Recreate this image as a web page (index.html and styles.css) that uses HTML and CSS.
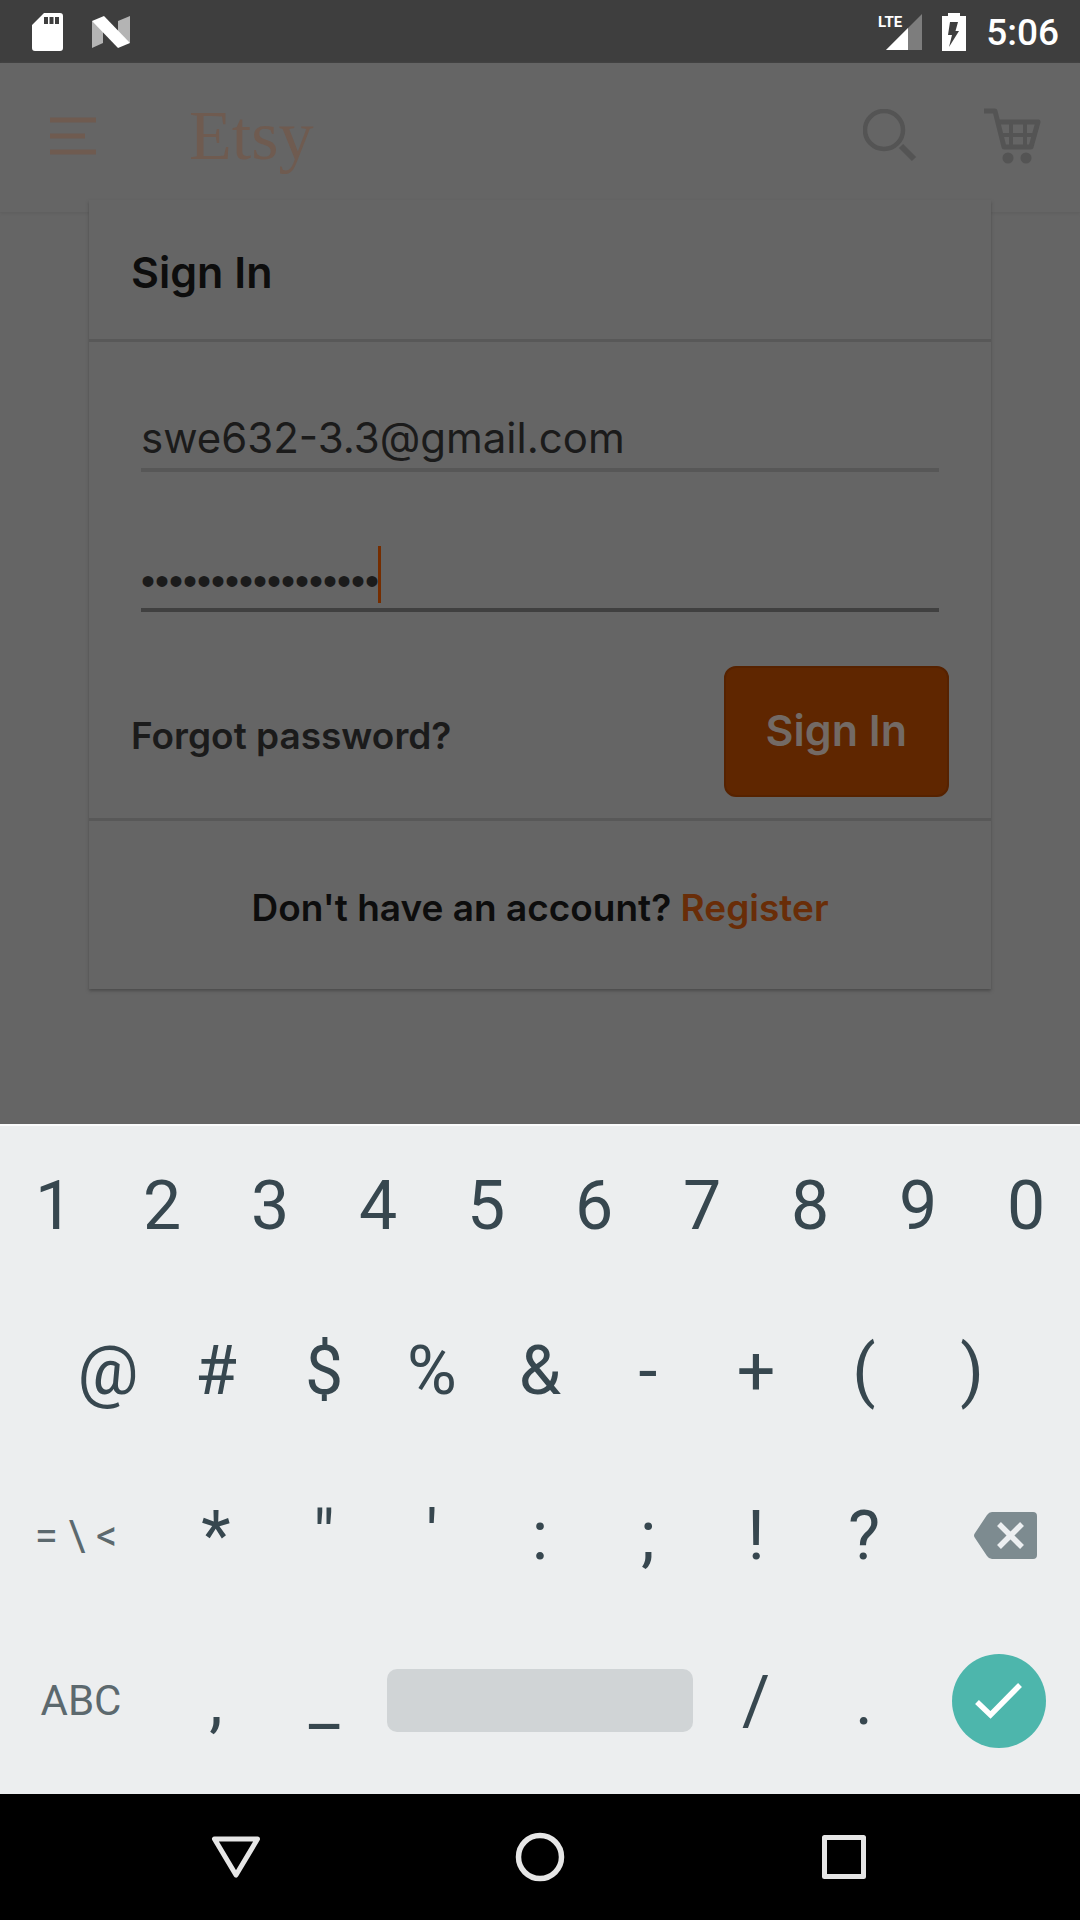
FILE: index.html
```html
<!DOCTYPE html>
<html lang="en">
<head>
<meta charset="utf-8">
<meta name="viewport" content="width=device-width, initial-scale=1">
<title>Etsy - Sign In</title>
<link rel="stylesheet" href="styles.css">
</head>
<body>
<div class="status">
  <div class="status-group">
    <svg class="icon-sd" viewBox="0 0 32 38" aria-hidden="true"><path fill="#fff" fill-rule="evenodd" d="M12 0H28Q31 0 31 3V35Q31 38 28 38H3Q0 38 0 35V12ZM12 4V11H16V4ZM17.500 4V11H21.500V4ZM23 4V11H27V4Z"/></svg>
    <svg class="icon-n" viewBox="0 0 38 32" aria-hidden="true"><path fill="#b4b4b4" d="M0 5L11 9V27L0 32ZM26 5L38 0V27L26 22Z"/><path fill="#fff" d="M0 5L12 0L38 27L26 32Z"/></svg>
  </div>
  <div class="status-group">
    <div class="signal">
      <svg class="icon-signal" viewBox="0 0 36 36" aria-hidden="true"><path fill="#7d7d7d" d="M36 0V36H0Z"/><path fill="#fff" d="M22 14V36H0Z"/></svg>
      <span class="lte">LTE</span>
    </div>
    <svg class="icon-battery" viewBox="0 0 24 38" aria-hidden="true"><path fill="#fff" d="M6 0H18V3H24V38H0V3H6Z"/><path fill="#3e3e3e" d="M8 9H16L13.500 18H17L7 34L10 22H6Z"/></svg>
    <span class="clock">5:06</span>
  </div>
</div>

<div class="app">
  <header class="appbar">
    <button class="bar-btn" type="button" aria-label="Menu"><svg class="icon-menu" viewBox="0 0 46 38" aria-hidden="true"><path stroke="#6f5b50" stroke-width="5" d="M0 3H46M0 19H35M0 35H46"/></svg></button>
    <a class="logo" href="#">Etsy</a>
    <button class="bar-btn" type="button" aria-label="Search"><svg class="icon-search" viewBox="0 0 54 54" fill="none" stroke="#545454" aria-hidden="true"><circle cx="21" cy="21" r="19" stroke-width="4.500"/><path stroke-width="6" d="M38 37L51 50"/></svg></button>
    <button class="bar-btn" type="button" aria-label="Cart"><svg class="icon-cart" viewBox="0 0 58 56" fill="none" stroke="#545454" aria-hidden="true"><path stroke-width="5" stroke-linejoin="round" d="M0 3H11L20 39H47L54 14H15"/><path stroke-width="4" d="M17 27H51M27 14V39M41 14V39"/><circle cx="24" cy="50" r="5.500" fill="#545454" stroke="none"/><circle cx="42" cy="50" r="5.500" fill="#545454" stroke="none"/></svg></button>
  </header>

  <main class="card">
    <h1 class="card-title">Sign In</h1>
    <form class="form" onsubmit="return false">
      <div class="field">
        <input class="input" type="text" aria-label="Email" value="swe632-3.3@gmail.com">
      </div>
      <div class="field field-active">
        <input class="input input-password" type="password" aria-label="Password" value="aaaaaaaaaaaaaaaaa">
        <span class="caret"></span>
      </div>
      <div class="actions">
        <a class="forgot" href="#">Forgot password?</a>
        <button class="submit" type="submit">Sign In</button>
      </div>
    </form>
    <p class="register">Don't have an account? <a class="register-link" href="#">Register</a></p>
  </main>
</div>

<section class="keyboard" aria-label="Keyboard">
  <div class="row">
    <button class="key">1</button><button class="key">2</button><button class="key">3</button><button class="key">4</button><button class="key">5</button><button class="key">6</button><button class="key">7</button><button class="key">8</button><button class="key">9</button><button class="key">0</button>
  </div>
  <div class="row row-inset">
    <button class="key">@</button><button class="key">#</button><button class="key">$</button><button class="key">%</button><button class="key">&amp;</button><button class="key">-</button><button class="key">+</button><button class="key">(</button><button class="key">)</button>
  </div>
  <div class="row">
    <button class="key key-wide key-mode key-symbols">= \ &lt;</button><button class="key">*</button><button class="key">"</button><button class="key">'</button><button class="key">:</button><button class="key">;</button><button class="key">!</button><button class="key">?</button>
    <button class="key key-wide key-delete" aria-label="Delete"><svg class="icon-delete" viewBox="0 0 63 47" aria-hidden="true"><path fill="#7d8b90" d="M18 0H59Q63 0 63 4V43Q63 47 59 47H18Q15 47 13 44L1 26Q-1 23.500 1 21L13 3Q15 0 18 0Z"/><path stroke="#eceff1" stroke-width="5.500" d="M25 12L48 35M48 12L25 35"/></svg></button>
  </div>
  <div class="row">
    <button class="key key-wide key-mode">ABC</button><button class="key">,</button><button class="key">_</button>
    <button class="key key-space" aria-label="Space"><span class="space-bar"></span></button>
    <button class="key">/</button><button class="key">.</button>
    <button class="key key-wide" aria-label="Done"><svg class="icon-done" viewBox="0 0 94 94" aria-hidden="true"><circle cx="47" cy="47" r="47" fill="#4db6ac"/><path fill="none" stroke="#fff" stroke-width="5.500" d="M25 48L38.500 61L68 31"/></svg></button>
  </div>
</section>

<nav class="navbar">
  <button class="nav-btn" aria-label="Back"><svg class="icon-nav" viewBox="0 0 50 50" fill="none" stroke="#e6e6e6" stroke-width="5" stroke-linejoin="round" aria-hidden="true"><path d="M3.500 7H46.500L25 43Z"/></svg></button>
  <button class="nav-btn" aria-label="Home"><svg class="icon-nav" viewBox="0 0 50 50" fill="none" stroke="#e6e6e6" stroke-width="5.500" aria-hidden="true"><circle cx="25" cy="25" r="21.500"/></svg></button>
  <button class="nav-btn" aria-label="Overview"><svg class="icon-nav" viewBox="0 0 50 50" fill="none" stroke="#e6e6e6" stroke-width="5" stroke-linejoin="round" aria-hidden="true"><path d="M5.500 5.500H44.500V44.500H5.500Z"/></svg></button>
</nav>
</body>
</html>
```
FILE: styles.css
```css
* {
  box-sizing: border-box;
}

body {
  margin: 0;
  min-height: 100vh;
  display: flex;
  flex-direction: column;
  background: #656565;
  font-family: Inter, "Open Sans", sans-serif;
}

button,
input {
  margin: 0;
  padding: 0;
  border: 0;
  background: none;
  font: inherit;
  color: inherit;
  outline: none;
}

svg {
  display: block;
  flex: none;
}

a {
  text-decoration: none;
}

/* Status bar */
.status {
  display: flex;
  justify-content: space-between;
  align-items: center;
  height: 63px;
  padding: 0 21px 0 32px;
  background: #3e3e3e;
  color: #fff;
  font-family: Roboto, sans-serif;
}

.status-group {
  display: flex;
  align-items: center;
  gap: 20px;
}

.icon-sd {
  width: 32px;
  height: 38px;
  margin-right: 8px;
}

.icon-n {
  width: 38px;
  height: 32px;
}

.signal {
  position: relative;
}

.icon-signal {
  width: 36px;
  height: 36px;
}

.lte {
  position: absolute;
  top: 0;
  right: 20px;
  font-size: 15px;
  line-height: 16px;
  font-weight: 700;
}

.icon-battery {
  width: 24px;
  height: 38px;
}

.clock {
  padding-top: 2px;
  font-size: 37px;
  line-height: 44px;
  font-weight: 500;
}

/* App bar */
.app {
  flex: 1;
}

.appbar {
  display: flex;
  align-items: center;
  height: 149px;
  padding: 0 38px 4px 50px;
  box-shadow: 0 1px 3px #5d5d5d;
}

.bar-btn {
  display: flex;
}

.icon-menu {
  width: 46px;
  height: 38px;
}

.logo {
  flex: 1;
  margin-left: 93px;
  font-family: "Liberation Serif", serif;
  font-size: 70px;
  line-height: 80px;
  color: #6f5b50;
}

.icon-search {
  width: 54px;
  height: 54px;
}

.icon-cart {
  width: 58px;
  height: 56px;
  margin-left: 67px;
}

/* Sign-in card */
.card {
  margin: -12px 89px 0;
  background: #656565;
  box-shadow: 0 2px 3px #4c4c4c;
}

.card-title {
  margin: 0;
  padding: 46px 42px 41px;
  border-bottom: 3px solid #585858;
  font-size: 43px;
  line-height: 52px;
  font-weight: 600;
  color: #0d0d0d;
}

.form {
  padding: 64px 42px 21px;
  border-bottom: 3px solid #585858;
}

.field {
  position: relative;
  margin: 0 10px;
  border-bottom: 4px solid #575757;
}

.field-active {
  margin-top: 74px;
  border-color: #404040;
}

.input {
  display: block;
  width: 100%;
  height: 62px;
  font-size: 42px;
  color: #1b1b1b;
}

.input-password {
  padding-top: 8px;
  font-family: "Liberation Sans", sans-serif;
  font-size: 40px;
}

.caret {
  position: absolute;
  left: 237px;
  bottom: 5px;
  width: 3px;
  height: 57px;
  background: #752d00;
}

.actions {
  display: flex;
  justify-content: space-between;
  align-items: center;
  margin-top: 54px;
}

.forgot {
  padding-top: 8px;
  font-size: 37px;
  line-height: 44px;
  font-weight: 600;
  color: #1b1b1b;
}

.submit {
  height: 131px;
  padding: 0 40px 4px;
  border: 2px solid #562200;
  border-radius: 12px;
  background: #5f2600;
  font-size: 43px;
  font-weight: 600;
  color: #736a65;
}

.register {
  margin: 0;
  padding: 65px 0 59px;
  text-align: center;
  font-size: 37px;
  line-height: 44px;
  font-weight: 600;
  color: #0d0d0d;
}

.register-link {
  color: #692d08;
}

/* Keyboard */
.keyboard {
  padding-bottom: 8px;
  border-top: 2px solid #fafbfb;
  background: #eceeef;
  font-family: Roboto, sans-serif;
  font-size: 68px;
  color: #37474f;
}

.row {
  display: grid;
  grid-template-columns: repeat(20, 1fr);
}

.key {
  display: flex;
  grid-column: span 2;
  justify-content: center;
  align-items: center;
  min-width: 0;
  height: 165px;
  padding-bottom: 6px;
}

.row-inset .key:first-child {
  grid-column: 2 / span 2;
}

.key-wide {
  grid-column: span 3;
}

.key-space {
  grid-column: span 6;
  padding: 0 9px 6px;
}

.key-mode {
  font-size: 42px;
  color: #5c696e;
}

.key-symbols {
  padding-right: 10px;
}

.key-delete {
  padding-left: 12px;
}

.space-bar {
  width: 100%;
  height: 63px;
  border-radius: 10px;
  background: #d0d4d6;
}

.icon-delete {
  width: 63px;
  height: 47px;
}

.icon-done {
  width: 94px;
  height: 94px;
}

/* System navigation */
.navbar {
  display: grid;
  grid-template-columns: repeat(3, 1fr);
  height: 126px;
  padding: 0 84px;
  background: #000;
}

.nav-btn {
  display: flex;
  justify-content: center;
  align-items: center;
}

.icon-nav {
  width: 50px;
  height: 50px;
}
```
